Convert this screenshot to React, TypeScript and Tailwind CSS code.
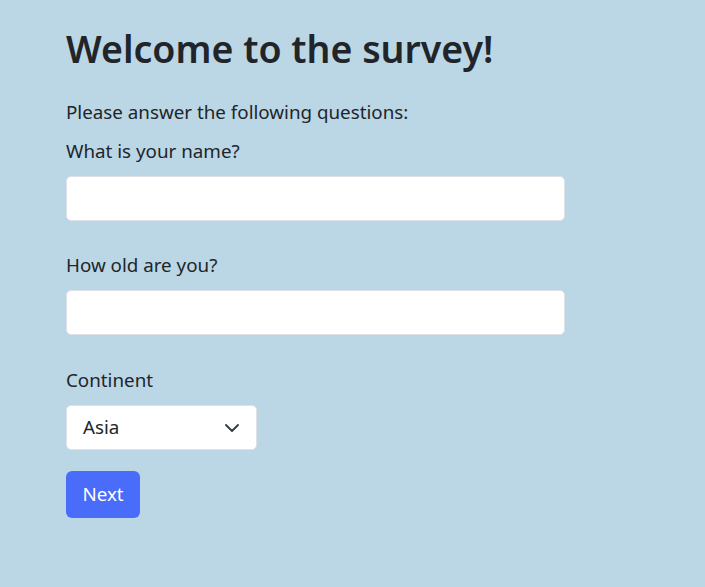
export default function App() {
  return (
    <div className="min-h-[587px] w-full bg-[#bbd6e5] font-['Noto_Sans',sans-serif] text-[#212529]">
      <div className="flex flex-col items-start pl-[66px] pt-[26px]">
        <h1 className="text-[37.5px] font-semibold leading-[1.2]">Welcome to the survey!</h1>

        <p className="mt-[27px] text-[18.8px] leading-[29px]">Please answer the following questions:</p>

        <label className="mt-[10px] text-[18.8px] leading-[29px]">What is your name?</label>
        <input
          type="text"
          className="mt-[10px] h-[45px] w-[499px] rounded-[5px] border border-[#dee2e6] bg-white px-4 text-[19px] outline-none"
        />

        <label className="mt-[30px] text-[18.8px] leading-[29px]">How old are you?</label>
        <input
          type="text"
          className="mt-[10px] h-[45px] w-[499px] rounded-[5px] border border-[#dee2e6] bg-white px-4 text-[19px] outline-none"
        />

        <label className="mt-[31px] text-[18.8px] leading-[29px]">Continent</label>
        <div className="mt-[10px] flex h-[45px] w-[191px] items-center justify-between rounded-[5px] border border-[#dee2e6] bg-white pl-4 pr-[17px]">
          <span className="text-[18.8px] leading-[29px]">Asia</span>
          <svg width="14" height="8" viewBox="0 0 14 8" fill="none">
            <path d="M1 1l6 6 6-6" stroke="#343a40" strokeWidth="1.8" strokeLinecap="round" strokeLinejoin="round" />
          </svg>
        </div>

        <button className="mt-[21px] h-[47px] w-[74px] rounded-[6px] bg-[#4a6cfa] text-[18.8px] text-white">
          Next
        </button>
      </div>
    </div>
  );
}
